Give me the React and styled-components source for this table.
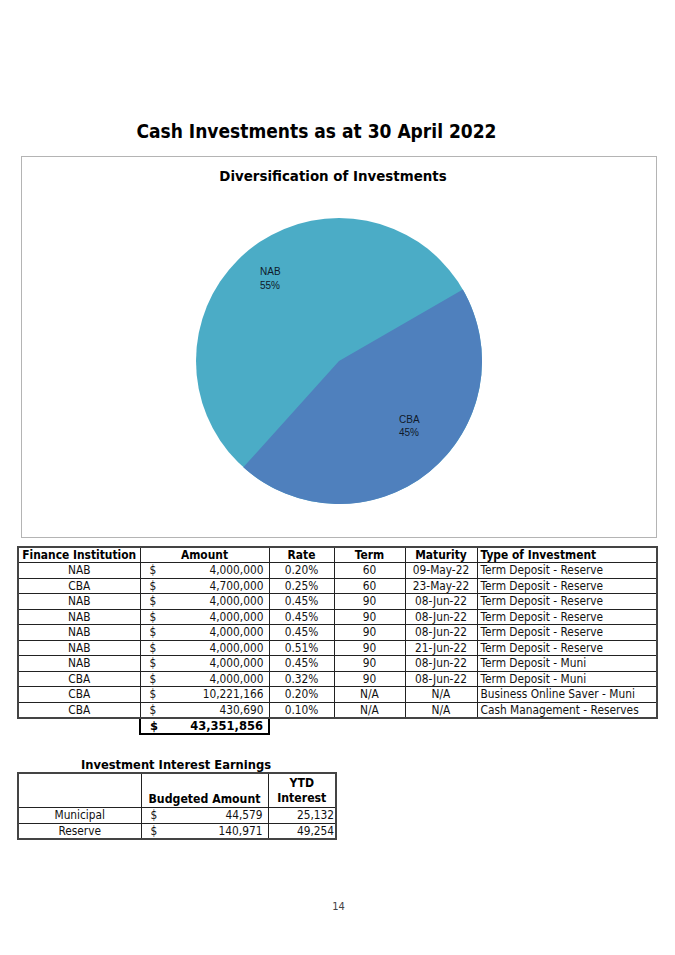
import React from "react";
import styled, { createGlobalStyle } from "styled-components";

const GlobalStyle = createGlobalStyle`
  html, body {
    margin: 0;
    padding: 0;
    background: #ffffff;
  }
  body {
    font-family: "DejaVu Sans Condensed", "DejaVu Sans", sans-serif;
    color: #111;
  }
`;

const investments = [
  ["NAB", "4,000,000", "0.20%", "60", "09-May-22", "Term Deposit - Reserve"],
  ["CBA", "4,700,000", "0.25%", "60", "23-May-22", "Term Deposit - Reserve"],
  ["NAB", "4,000,000", "0.45%", "90", "08-Jun-22", "Term Deposit - Reserve"],
  ["NAB", "4,000,000", "0.45%", "90", "08-Jun-22", "Term Deposit - Reserve"],
  ["NAB", "4,000,000", "0.45%", "90", "08-Jun-22", "Term Deposit - Reserve"],
  ["NAB", "4,000,000", "0.51%", "90", "21-Jun-22", "Term Deposit - Reserve"],
  ["NAB", "4,000,000", "0.45%", "90", "08-Jun-22", "Term Deposit - Muni"],
  ["CBA", "4,000,000", "0.32%", "90", "08-Jun-22", "Term Deposit - Muni"],
  ["CBA", "10,221,166", "0.20%", "N/A", "N/A", "Business Online Saver - Muni"],
  ["CBA", "430,690", "0.10%", "N/A", "N/A", "Cash Management - Reserves"],
];

const earnings = [
  ["Municipal", "44,579", "25,132"],
  ["Reserve", "140,971", "49,254"],
];

function App() {
  return (
    <Page>
      <GlobalStyle />
      <Title>Cash Investments as at 30 April 2022</Title>

      <ChartBox>
        <ChartTitle>Diversification of Investments</ChartTitle>
        <PieChart />
      </ChartBox>

      <MainTable>
        <colgroup>
          <col style={{ width: 122 }} />
          <col style={{ width: 129 }} />
          <col style={{ width: 65 }} />
          <col style={{ width: 71 }} />
          <col style={{ width: 72 }} />
          <col />
        </colgroup>
        <thead>
          <tr>
            <Th $first>Finance Institution</Th>
            <Th>Amount</Th>
            <Th>Rate</Th>
            <Th>Term</Th>
            <Th>Maturity</Th>
            <Th $align="left" $last>
              Type of Investment
            </Th>
          </tr>
        </thead>
        <tbody>
          {investments.map((row, i) => {
            const last = i === investments.length - 1;
            return (
              <tr key={i}>
                <Td $first $bottom={last}>
                  {row[0]}
                </Td>
                <Td $bottom={last}>
                  <Money>
                    <span>$</span>
                    <span>{row[1]}</span>
                  </Money>
                </Td>
                <Td $bottom={last}>{row[2]}</Td>
                <Td $bottom={last}>{row[3]}</Td>
                <Td $bottom={last}>{row[4]}</Td>
                <Td $align="left" $last $bottom={last}>
                  {row[5]}
                </Td>
              </tr>
            );
          })}
          <tr>
            <Blank />
            <TotalCell>
              <Money>
                <span>$</span>
                <span>43,351,856</span>
              </Money>
            </TotalCell>
            <Blank />
            <Blank />
            <Blank />
            <Blank />
          </tr>
        </tbody>
      </MainTable>

      <EarningsBlock>
        <EarningsTitle>Investment Interest Earnings</EarningsTitle>
        <EarningsTable>
          <colgroup>
            <col style={{ width: 123 }} />
            <col style={{ width: 127 }} />
            <col style={{ width: 68 }} />
          </colgroup>
          <thead>
            <tr>
              <EarnTh $first />
              <EarnTh $valign="bottom">Budgeted Amount</EarnTh>
              <EarnTh $last>
                YTD
                <br />
                Interest
              </EarnTh>
            </tr>
          </thead>
          <tbody>
            {earnings.map((row, i) => {
              const last = i === earnings.length - 1;
              return (
                <tr key={row[0]}>
                  <Td $first $bottom={last}>
                    {row[0]}
                  </Td>
                  <Td $bottom={last}>
                    <Money>
                      <span>$</span>
                      <span>{row[1]}</span>
                    </Money>
                  </Td>
                  <Td $align="right" $last $bottom={last}>
                    {row[2]}
                  </Td>
                </tr>
              );
            })}
          </tbody>
        </EarningsTable>
      </EarningsBlock>

      <PageNumber>14</PageNumber>
    </Page>
  );
}

function PieChart() {
  // CBA slice runs clockwise from 60deg to 222deg (45%)
  const cx = 145;
  const cy = 145;
  const r = 143;
  const pt = (deg) => {
    const a = (deg * Math.PI) / 180;
    return [cx + r * Math.sin(a), cy - r * Math.cos(a)];
  };
  const [x1, y1] = pt(60);
  const [x2, y2] = pt(222);
  return (
    <PieSvg width="290" height="290" viewBox="0 0 290 290">
      <circle cx={cx} cy={cy} r={r} fill="#4bacc6" />
      <path
        d={`M${cx} ${cy} L${x1} ${y1} A${r} ${r} 0 0 1 ${x2} ${y2} Z`}
        fill="#4f80bd"
      />
      <SliceLabel x="66" y="59">NAB</SliceLabel>
      <SliceLabel x="66" y="73">55%</SliceLabel>
      <SliceLabel x="205" y="207">CBA</SliceLabel>
      <SliceLabel x="205" y="220">45%</SliceLabel>
    </PieSvg>
  );
}

export default App;

const Page = styled.div`
  width: 675px;
  height: 955px;
  box-sizing: border-box;
  padding: 120px 17px 0 17px;
  display: flex;
  flex-direction: column;
`;

const Title = styled.h1`
  margin: 0 42px 0 0;
  font-size: 19px;
  line-height: 22px;
  font-weight: bold;
  text-align: center;
  color: #000;
`;

const ChartBox = styled.div`
  margin: 14px 1px 0 4px;
  height: 382px;
  box-sizing: border-box;
  border: 1px solid #b4b4b4;
  display: flex;
  flex-direction: column;
  align-items: center;
  padding-top: 10px;
`;

const ChartTitle = styled.div`
  font-size: 14.9px;
  line-height: 18px;
  font-weight: bold;
  color: #000;
  margin-right: 12px;
`;

const PieSvg = styled.svg`
  display: block;
  margin-top: 31px;
`;

const SliceLabel = styled.text`
  font-family: "Liberation Sans", Arial, sans-serif;
  font-size: 10px;
  fill: #0f1a2a;
`;

const MainTable = styled.table`
  margin-top: 8px;
  width: 641px;
  border-collapse: collapse;
  table-layout: fixed;
  font-size: 11.8px;
`;

const cellBorders = (p) => `
  border: 1px solid #222;
  ${p.$first ? "border-left: 2px solid #444;" : ""}
  ${p.$last ? "border-right: 2px solid #444;" : ""}
  ${p.$bottom ? "border-bottom: 2px solid #444;" : ""}
`;

const Th = styled.th`
  ${cellBorders}
  border-top: 2px solid #444;
  height: 14px;
  padding: 0 3px;
  line-height: 14px;
  font-size: 11.9px;
  font-weight: bold;
  text-align: ${(p) => p.$align || "center"};
  color: #000;
  white-space: nowrap;
`;

const Td = styled.td`
  ${cellBorders}
  height: 14.5px;
  padding: 0 ${(p) => (p.$align === "right" ? "1px" : "3px")} 0 3px;
  line-height: 14px;
  text-align: ${(p) => p.$align || "center"};
  color: #111;
  white-space: nowrap;
`;

const Money = styled.div`
  display: flex;
  justify-content: space-between;
  padding: 0 2px 0 6px;
`;

const Blank = styled.td`
  border: none;
  padding: 0;
`;

const TotalCell = styled.td`
  border: 2px solid #000;
  height: 14px;
  padding: 0 3px;
  line-height: 14px;
  font-weight: bold;
  font-size: 12.8px;
  color: #000;
`;

const EarningsBlock = styled.div`
  margin-top: 23px;
  width: 318px;
  display: flex;
  flex-direction: column;
`;

const EarningsTitle = styled.div`
  font-size: 12.8px;
  line-height: 14px;
  font-weight: bold;
  text-align: center;
  color: #000;
`;

const EarningsTable = styled.table`
  margin-top: 0;
  width: 318px;
  border-collapse: collapse;
  table-layout: fixed;
  font-size: 11.8px;
`;

const EarnTh = styled.th`
  ${cellBorders}
  border-top: 2px solid #444;
  height: 33px;
  padding: 0 3px 0;
  line-height: 15px;
  font-size: 12.2px;
  font-weight: bold;
  text-align: center;
  vertical-align: ${(p) => p.$valign || "middle"};
  color: #000;
`;

const PageNumber = styled.div`
  margin-top: auto;
  margin-bottom: 42px;
  text-align: center;
  font-size: 11px;
  color: #444;
  padding-left: 2px;
`;
